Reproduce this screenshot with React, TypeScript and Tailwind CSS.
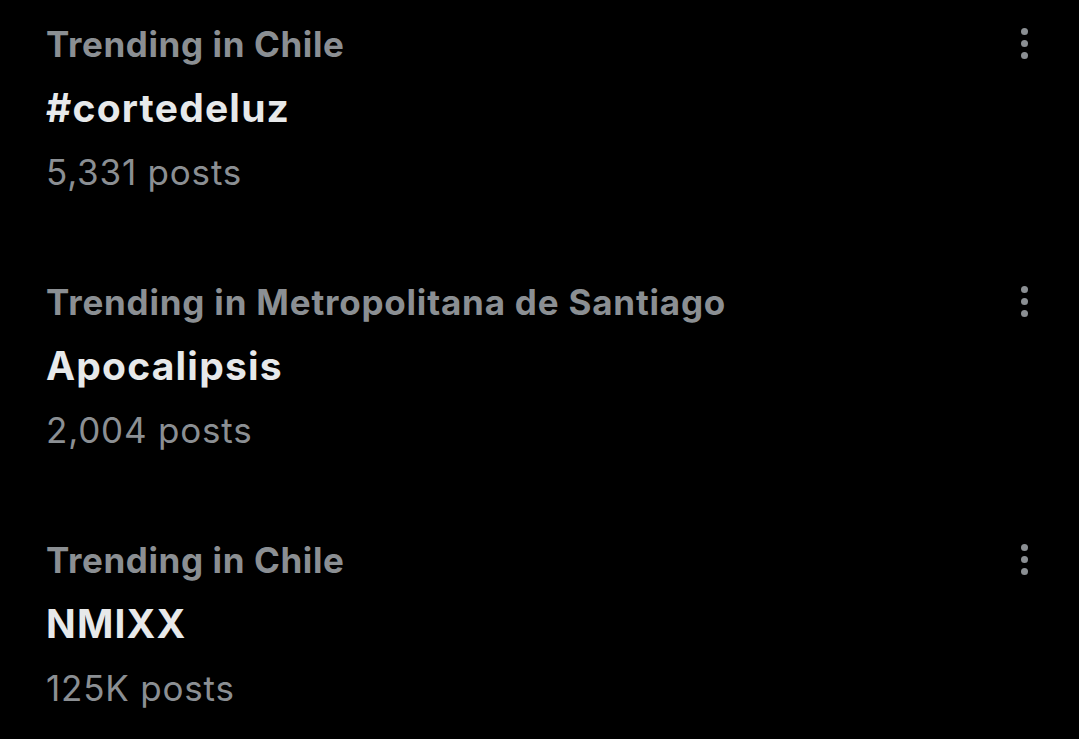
const trends = [
  { place: "Trending in Chile", name: "#cortedeluz", posts: "5,331 posts", track: "tracking-[0.6px]" },
  { place: "Trending in Metropolitana de Santiago", name: "Apocalipsis", posts: "2,004 posts", track: "tracking-[0.8px]" },
  { place: "Trending in Chile", name: "NMIXX", posts: "125K posts", track: "tracking-[0.6px]" },
];

function MoreDots() {
  return (
    <div className="flex flex-col items-center gap-[5px] pt-[16px]">
      <span className="w-[7px] h-[7px] rounded-full bg-[#8b8f93]" />
      <span className="w-[7px] h-[7px] rounded-full bg-[#8b8f93]" />
      <span className="w-[7px] h-[7px] rounded-full bg-[#8b8f93]" />
    </div>
  );
}

export default function App() {
  return (
    <div className="w-[1079px] h-[739px] bg-black overflow-hidden font-['Inter',sans-serif]">
      <div className="flex flex-col gap-[66px] pt-[12px] pl-[46px] pr-[51px]">
        {trends.map((t, i) => (
          <div key={i} className="flex justify-between items-start">
            <div className="flex flex-col">
              <span className={`h-[64px] leading-[64px] text-[35px] font-bold text-[#8b8f93] ${t.track}`}>
                {t.place}
              </span>
              <span className="h-[64px] leading-[64px] text-[39px] tracking-[1.2px] font-bold text-[#e7e9ea]">
                {t.name}
              </span>
              <span className="h-[64px] leading-[64px] text-[35px] tracking-[0.8px] text-[#8b8f93]">
                {t.posts}
              </span>
            </div>
            <MoreDots />
          </div>
        ))}
      </div>
    </div>
  );
}
